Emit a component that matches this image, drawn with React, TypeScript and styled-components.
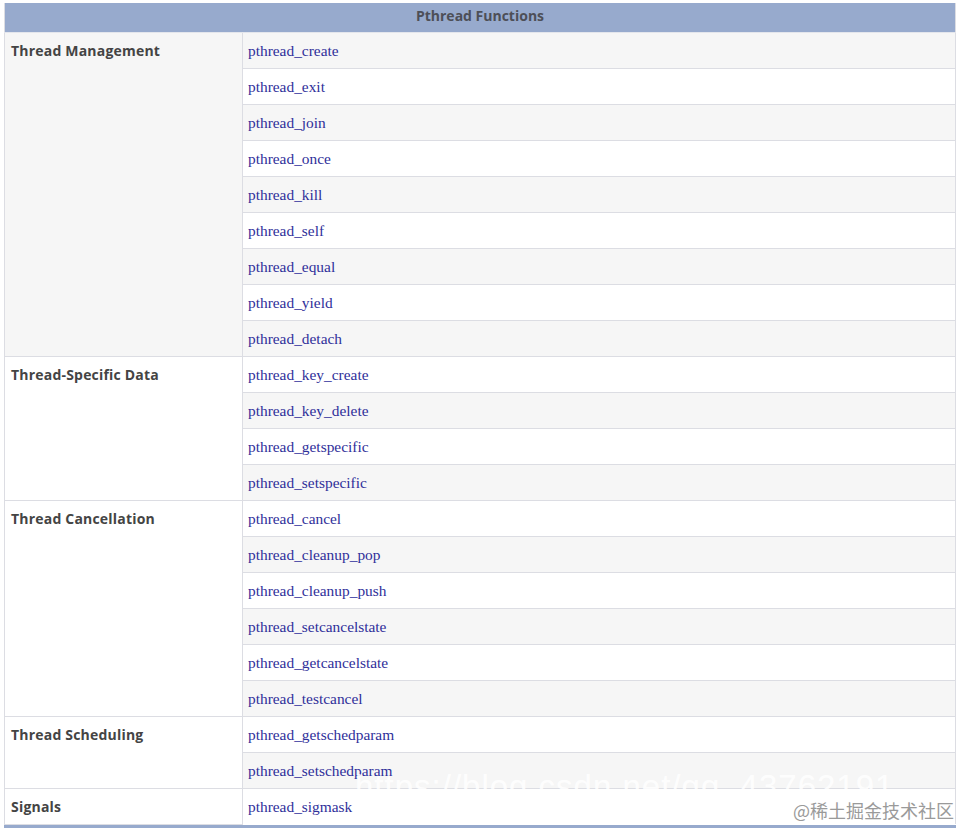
import React from 'react'
import styled, {createGlobalStyle} from 'styled-components'

type Group = {
  title: string,
  items: string[],
}

const groups: Group[] = [
  {
    title: 'Thread Management',
    items: [
      'pthread_create', 'pthread_exit', 'pthread_join', 'pthread_once', 'pthread_kill',
      'pthread_self', 'pthread_equal', 'pthread_yield', 'pthread_detach',
    ],
  },
  {
    title: 'Thread-Specific Data',
    items: ['pthread_key_create', 'pthread_key_delete', 'pthread_getspecific', 'pthread_setspecific'],
  },
  {
    title: 'Thread Cancellation',
    items: [
      'pthread_cancel', 'pthread_cleanup_pop', 'pthread_cleanup_push',
      'pthread_setcancelstate', 'pthread_getcancelstate', 'pthread_testcancel',
    ],
  },
  {
    title: 'Thread Scheduling',
    items: ['pthread_getschedparam', 'pthread_setschedparam'],
  },
  {
    title: 'Signals',
    items: ['pthread_sigmask'],
  },
]

const App = () => {
  let index = 0
  return (
    <Page>
      <GlobalStyle />
      <Frame>
        <Table>
          <colgroup>
            <TitleCol />
            <col />
          </colgroup>
          <thead>
            <tr>
              <HeadCell colSpan={2}>Pthread Functions</HeadCell>
            </tr>
          </thead>
          <tbody>
            {groups.map((group) =>
              group.items.map((item, i) => {
                const striped = index++ % 2 === 0
                return (
                  <tr key={item}>
                    {i === 0 && (
                      <GroupCell rowSpan={group.items.length} $striped={striped}>
                        {group.title}
                      </GroupCell>
                    )}
                    <FuncCell $striped={striped}>
                      <FuncLink href="#">{item}</FuncLink>
                    </FuncCell>
                  </tr>
                )
              })
            )}
          </tbody>
        </Table>
      </Frame>
      <UrlMark>https://blog.csdn.net/qq_43762191</UrlMark>
      <SiteMark>@稀土掘金技术社区</SiteMark>
    </Page>
  )
}

export default App

const GlobalStyle = createGlobalStyle`
  html, body {
    margin: 0;
    padding: 0;
    background: #fff;
  }
`

const Page = styled.div`
  position: relative;
  width: 960px;
  height: 828px;
  padding: 3px 4px 0 4px;
  box-sizing: border-box;
  overflow: hidden;
`

const Frame = styled.div`
  width: 952px;
  border-bottom: 4px solid #97aacd;
`

const Table = styled.table`
  width: 100%;
  border-collapse: collapse;
  table-layout: fixed;
  border-left: 1px solid #dcdde3;
  border-right: 1px solid #dcdde3;
`

const TitleCol = styled.col`
  width: 238px;
`

const HeadCell = styled.th`
  height: 29px;
  padding: 0 0 3px 0;
  box-sizing: border-box;
  background: #97aacd;
  border-bottom: 1px solid #e4e6ec;
  color: #4d4f57;
  font-family: "Open Sans", "Liberation Sans", sans-serif;
  font-size: 14px;
  font-weight: 700;
  text-align: center;
  vertical-align: middle;
`

const GroupCell = styled.td<{ $striped: boolean }>`
  padding: 8px 6px 0 6px;
  background: ${(p) => (p.$striped ? '#f6f6f6' : '#fff')};
  border-right: 1px solid #dcdde3;
  border-bottom: 1px solid #dcdde3;
  color: #444;
  font-family: "Open Sans", "Liberation Sans", sans-serif;
  font-size: 14px;
  font-weight: 700;
  letter-spacing: 0.2px;
  line-height: 19px;
  vertical-align: top;
`

const FuncCell = styled.td<{ $striped: boolean }>`
  height: 36px;
  padding: 2px 5px 0 5px;
  background: ${(p) => (p.$striped ? '#f6f6f6' : '#fff')};
  border-bottom: 1px solid #dcdde3;
  vertical-align: middle;
  box-sizing: border-box;
  tr:last-child > & {
    border-bottom: none;
  }
`

const FuncLink = styled.a`
  color: #2f2f9a;
  font-family: "Liberation Serif", "Times New Roman", serif;
  font-size: 15.4px;
  text-decoration: none;
`

const UrlMark = styled.div`
  position: absolute;
  left: 355px;
  top: 768px;
  color: rgba(255, 255, 255, 0.9);
  font-family: "Liberation Sans", Arial, sans-serif;
  font-size: 33px;
  line-height: 38px;
  letter-spacing: 1px;
  white-space: nowrap;
  pointer-events: none;
`

const SiteMark = styled.div`
  position: absolute;
  right: 6px;
  top: 799px;
  color: #9a9a9a;
  font-family: "Noto Sans CJK SC", sans-serif;
  font-size: 18px;
  line-height: 22px;
  white-space: nowrap;
  pointer-events: none;
`
